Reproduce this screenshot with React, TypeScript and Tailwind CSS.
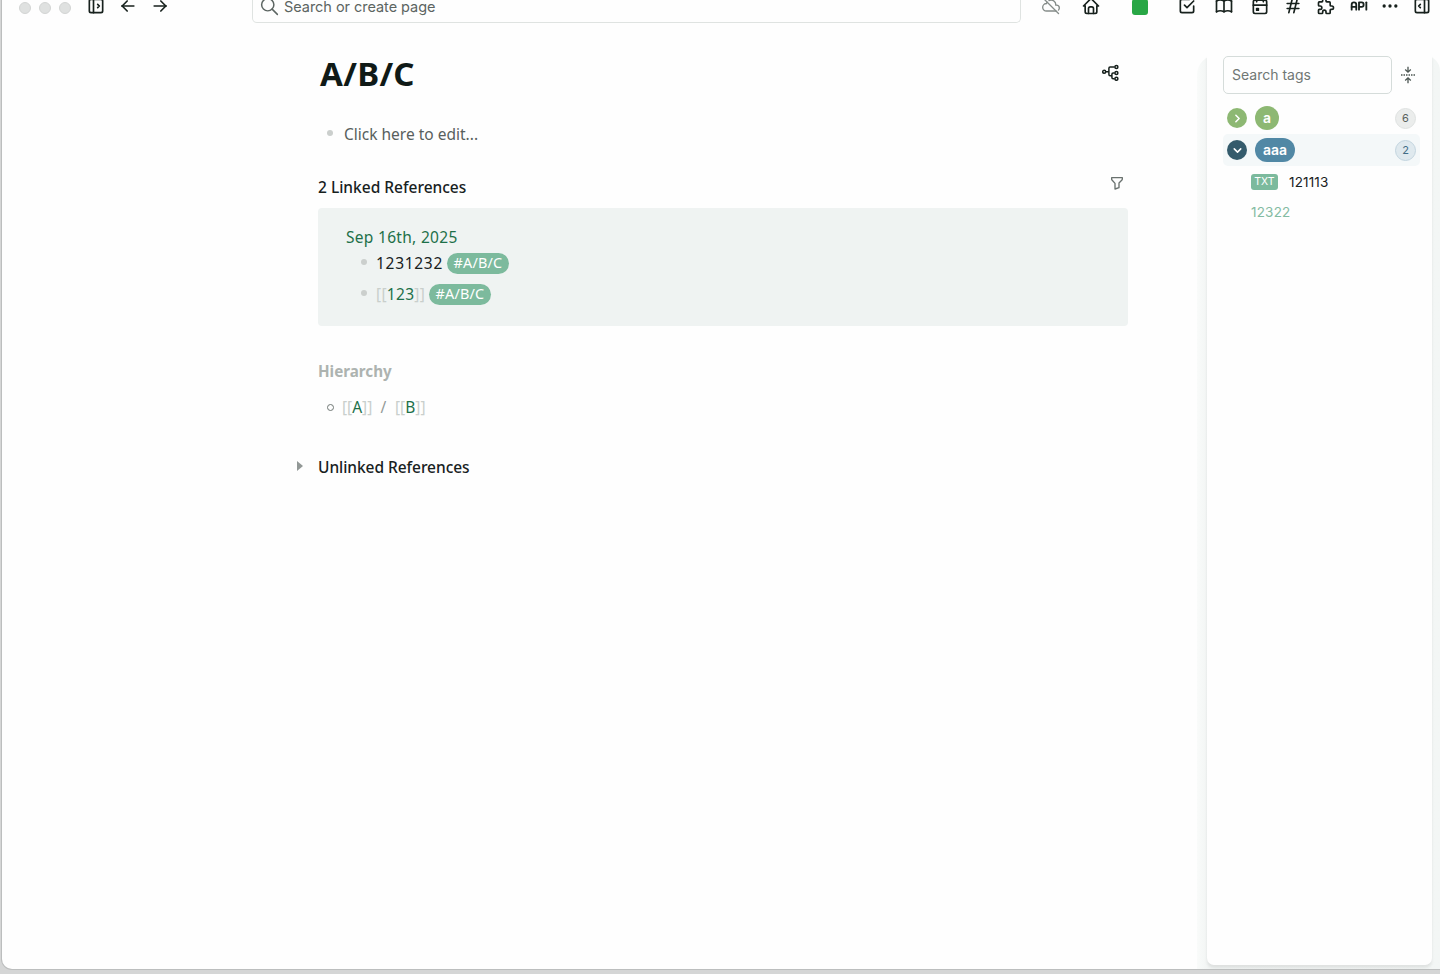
import React from "react";
import {
  TbLayoutSidebarLeftExpand, TbArrowLeft, TbArrowRight, TbSearch, TbCloudOff, TbHome, TbCheckbox,
  TbBook, TbCalendarEvent, TbHash, TbPuzzle, TbApi, TbDots, TbLayoutSidebarRightExpand, TbFilter,
  TbChevronRight, TbChevronDown,
} from "react-icons/tb";

const Bullet = () => <span className="mb-[2px] size-[6px] shrink-0 rounded-full bg-[#cbcfcd]" />;

const Tag = () => (
  <span className="flex h-[21px] w-[62px] shrink-0 items-center justify-center rounded-full bg-[#7cba9d] text-[14.4px] tracking-[0.2px] text-white">
    #A/B/C
  </span>
);

const PageRef = ({ name }: { name: string }) => (
  <span className="flex text-[#1d7049]">
    <span className="text-[#c9cfcc]">[[</span>{name}<span className="text-[#c9cfcc]">]]</span>
  </span>
);

function HierarchyIcon() {
  return (
    <svg className="mb-[4px]" width="18" height="18" viewBox="0 0 18 18" fill="none" stroke="#17211d" strokeWidth="1.5">
      <circle cx="2.2" cy="8.8" r="1.5" />
      <circle cx="14.4" cy="4" r="1.5" />
      <circle cx="14.4" cy="10" r="1.5" />
      <circle cx="14.4" cy="15.8" r="1.5" />
      <path d="M3.9 8.8h3M12.7 4H8.1q-1.2 0-1.2 1.2v6.4q0 1.2 1.2 1.2h1.8M12.7 10h-1.6q-1.2 0-1.2 1.2v3.4q0 1.2 1.2 1.2h1.6" />
    </svg>
  );
}

function CollapseIcon() {
  return (
    <svg width="16" height="18" viewBox="0 0 16 18" fill="none" stroke="#4b5551" strokeWidth="1.3">
      <path d="M8 .8v5M5.2 3.5 8 6.2l2.8-2.7M8 17.2v-5M5.2 14.5 8 11.8l2.8 2.7" />
      <path d="M1 9h14" strokeDasharray="1.5 1" />
    </svg>
  );
}

function Header() {
  return (
    <header className="flex h-[23px] shrink-0 items-start overflow-hidden text-[#17211d]">
      <div className="ml-[17px] flex gap-[8px] pt-[2px]">
        <span className="size-[12px] rounded-full border border-[#d3d5d4] bg-[#dfe1e0]" />
        <span className="size-[12px] rounded-full border border-[#d3d5d4] bg-[#dfe1e0]" />
        <span className="size-[12px] rounded-full border border-[#d3d5d4] bg-[#dfe1e0]" />
      </div>
      <div className="-mt-[4px] ml-[15px] flex gap-[12px]">
        <TbLayoutSidebarLeftExpand size={20} />
        <TbArrowLeft size={20} />
        <TbArrowRight size={20} />
      </div>
      <div className="ml-[82px] flex h-[23px] w-[769px] shrink-0 items-start rounded-b-[5px] border border-t-0 border-[#dfe3e1] pl-[6px] text-[#5c6562]">
        <TbSearch size={21} strokeWidth={1.7} className="-mt-[4px]" />
        <span className="ml-[4px] font-['Inter',sans-serif] text-[14.5px] leading-[14px] tracking-[-0.04px]">Search or create page</span>
      </div>
      <div className="-mt-[4px] ml-[20px] flex">
        <TbCloudOff size={20} strokeWidth={1.6} className="text-[#858c89]" />
        <TbHome size={20} className="ml-[20px]" />
        <span className="mt-[3px] ml-[31px] h-[16px] w-[16px] rounded-[3px] bg-[#28a745]" />
        <TbCheckbox size={20} className="ml-[29px]" />
        <TbBook size={20} className="ml-[17px]" />
        <TbCalendarEvent size={20} className="ml-[16px]" />
        <TbHash size={20} className="ml-[13px]" />
        <TbPuzzle size={20} className="ml-[13px]" />
        <TbApi size={22} className="-mt-[1px] ml-[12px]" />
        <TbDots size={20} className="ml-[10px]" />
        <TbLayoutSidebarRightExpand size={20} className="ml-[12px]" />
      </div>
    </header>
  );
}

function PageContent() {
  return (
    <main className="ml-[316px] w-[810px] shrink-0 font-['Noto_Sans',sans-serif] text-[15.5px] leading-[24px] text-[#17211d]">
      <div className="mt-[30px] flex h-[42px] items-center justify-between pr-[8px] pl-[2px]">
        <h1 className="text-[33px] font-bold leading-[42px] tracking-[0.3px] text-[#101a17]">A/B/C</h1>
        <HierarchyIcon />
      </div>
      <div className="mt-[27px] flex h-[24px] items-center pl-[9px] text-[#58605d]">
        <Bullet />
        <span className="ml-[11px]">Click here to edit...</span>
      </div>
      <div className="mt-[29px] flex h-[24px] items-center justify-between pr-[3px]">
        <h2 className="font-medium">2 Linked References</h2>
        <TbFilter size={16} className="mb-[8px] text-[#69716e]" />
      </div>
      <section className="mt-[9px] h-[118px] rounded-[4px] bg-[#eff3f2] pt-[17px] pl-[28px]">
        <div className="tracking-[0.3px] text-[#1d7049]">Sep 16th, 2025</div>
        <div className="mt-[2px] flex h-[24px] items-center pl-[15px]">
          <Bullet />
          <span className="ml-[9px] mr-[4px] w-[67px] tracking-[0.7px]">1231232</span>
          <Tag />
        </div>
        <div className="mt-[7px] flex h-[24px] items-center pl-[15px]">
          <Bullet />
          <span className="ml-[9px] mr-[4px] w-[49px] tracking-[0.3px]"><PageRef name="123" /></span>
          <Tag />
        </div>
      </section>
      <h2 className="mt-[33px] h-[24px] text-[15.2px] font-bold text-[#adb3b0]">Hierarchy</h2>
      <div className="mt-[12px] flex h-[24px] items-center pl-[8.5px]">
        <span className="size-[7px] shrink-0 rounded-full border border-[#6f7774]" />
        <span className="ml-[8.5px] w-[30px]"><PageRef name="A" /></span>
        <span className="w-[23px] text-center text-[#939a97]">/</span>
        <PageRef name="B" />
      </div>
      <div className="mt-[36px] -ml-[21px] flex h-[24px] items-center">
        <span className="mb-[3px] h-0 w-0 border-y-[5px] border-l-[6px] border-y-transparent border-l-[#929896]" />
        <h2 className="ml-[15px] tracking-[-0.05px] font-medium">Unlinked References</h2>
      </div>
    </main>
  );
}

function TagsPanel() {
  return (
    <aside className="mt-[32px] ml-[69px] flex min-w-0 flex-1 rounded-tl-[20px] rounded-tr-[16px] bg-linear-to-r from-[#f9fbfa] via-[#f1f4f3] via-5% to-[#f3f6f5] pr-[8px] pb-[4px] pl-[10px]">
      <div className="flex min-w-0 flex-1 flex-col rounded-b-[7px] bg-[#fefefe] pr-[12px] pl-[16px] font-['Inter',sans-serif] shadow-[0_3px_3px_rgba(0,0,0,0.08)]">
        <div className="mt-[1px] flex items-center">
          <div className="flex h-[38px] w-[169px] shrink-0 items-center rounded-[5px] border border-[#d5dcda] pb-[2px] pl-[8px] text-[14px] text-[#707774]">
            Search tags
          </div>
          <span className="ml-[8px]"><CollapseIcon /></span>
        </div>
        <div className="mt-[8px] flex h-[32px] items-center pl-[4px]">
          <span className="flex size-[20px] items-center justify-center rounded-full bg-[#8db873] text-white"><TbChevronRight size={13} strokeWidth={2.8} /></span>
          <span className="ml-[8px] flex size-[24px] items-center justify-center rounded-full bg-[#8db873] pb-[1px] text-[14px] font-semibold text-white">a</span>
          <span className="ml-auto mr-[4px] flex size-[21px] items-center justify-center rounded-full border border-[#dfe2e1] bg-[#ebedec] text-[11px] text-[#59615e]">6</span>
        </div>
        <div className="flex h-[32px] items-center rounded-[5px] bg-[#f4f8f9] pl-[4px]">
          <span className="flex size-[20px] items-center justify-center rounded-full bg-[#345b6c] text-white"><TbChevronDown size={13} strokeWidth={2.8} /></span>
          <span className="ml-[8px] flex h-[24px] w-[40px] items-center justify-center rounded-full bg-[#5188a5] pb-[1px] text-[14px] font-semibold text-white">aaa</span>
          <span className="ml-auto mr-[4px] flex size-[21px] items-center justify-center rounded-full border border-[#c3d5df] bg-[#dfe9ee] text-[11px] text-[#416d86]">2</span>
        </div>
        <div className="flex h-[32px] items-center pl-[28px]">
          <span className="flex h-[16px] w-[27px] items-center justify-center rounded-[3px] bg-[#7cba9d] text-[10.5px] text-white">TXT</span>
          <span className="ml-[11px] pt-[1px] text-[13.5px] tracking-[0.15px] text-[#17211d]">121113</span>
        </div>
        <div className="flex h-[28px] items-center pt-[1px] pl-[28px] text-[13.5px] tracking-[0.2px] text-[#83bba2]">12322</div>
      </div>
    </aside>
  );
}

export default function App() {
  return (
    <div className="flex h-[974px] w-[1440px] flex-col overflow-hidden bg-[#d5d6d6] pb-[5px] pl-[2px]">
      <div className="flex min-h-0 flex-1 flex-col overflow-hidden rounded-bl-[10px] bg-[#fefefe] shadow-[0_0_0_1px_#bcbebe]">
        <Header />
        <div className="flex min-h-0 flex-1">
          <PageContent />
          <TagsPanel />
        </div>
      </div>
    </div>
  );
}
